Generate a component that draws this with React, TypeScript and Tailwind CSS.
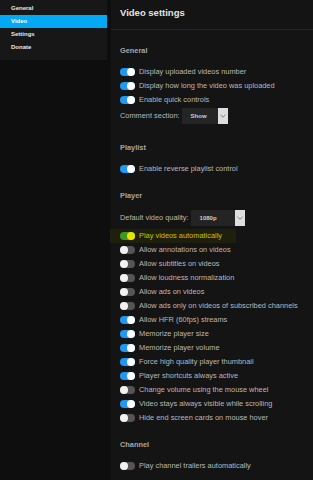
import React from 'react';

type Row = { label: string; on: boolean; highlight?: boolean };

const navItems = ['General', 'Video', 'Settings', 'Donate'];

const generalRows: Row[] = [
  { label: 'Display uploaded videos number', on: true },
  { label: 'Display how long the video was uploaded', on: true },
  { label: 'Enable quick controls', on: true },
];

const playerRows: Row[] = [
  { label: 'Play videos automatically', on: true, highlight: true },
  { label: 'Allow annotations on videos', on: false },
  { label: 'Allow subtitles on videos', on: false },
  { label: 'Allow loudness normalization', on: false },
  { label: 'Allow ads on videos', on: false },
  { label: 'Allow ads only on videos of subscribed channels', on: false },
  { label: 'Allow HFR (60fps) streams', on: true },
  { label: 'Memorize player size', on: true },
  { label: 'Memorize player volume', on: true },
  { label: 'Force high quality player thumbnail', on: true },
  { label: 'Player shortcuts always active', on: true },
  { label: 'Change volume using the mouse wheel', on: false },
  { label: 'Video stays always visible while scrolling', on: true },
  { label: 'Hide end screen cards on mouse hover', on: false },
];

function Toggle({ on, highlight }: { on: boolean; highlight?: boolean }) {
  if (highlight) {
    return (
      <span className="relative flex h-[8px] w-[15px] shrink-0 items-center rounded-full bg-[#3f9a1c]">
        <span className="absolute right-0 h-[8px] w-[8px] rounded-full bg-[#e8e400]" />
      </span>
    );
  }
  return (
    <span
      className={
        on
          ? 'relative flex h-[8px] w-[15px] shrink-0 items-center rounded-full bg-[#2196f3]'
          : 'relative flex h-[8px] w-[15px] shrink-0 items-center rounded-full bg-[#555555]'
      }
    >
      <span
        className={
          on
            ? 'absolute right-0 h-[8px] w-[8px] rounded-full bg-white'
            : 'absolute left-0 h-[8px] w-[8px] rounded-full bg-[#f2f2f2]'
        }
      />
    </span>
  );
}

function ToggleRow({ row }: { row: Row }) {
  if (row.highlight) {
    return (
      <div className="-ml-[10px] flex h-[14px] w-fit items-center gap-[4px] bg-[#1f1f0d] pl-[10px] pr-[14px]">
        <Toggle on={row.on} highlight />
        <span className="text-[#c9c400]">{row.label}</span>
      </div>
    );
  }
  return (
    <div className="flex h-[14px] items-center gap-[4px]">
      <Toggle on={row.on} />
      <span>{row.label}</span>
    </div>
  );
}

function Select({ value, width }: { value: string; width: string }) {
  return (
    <div className={`flex h-[16px] items-stretch bg-[#242424] ${width}`}>
      <span className="flex flex-1 items-center pl-[9px] text-[6px] font-bold text-[#cfcfcf]">{value}</span>
      <span className="flex w-[10px] items-center justify-center bg-[#dedede]">
        <svg width="6" height="4" viewBox="0 0 6 4" fill="none">
          <path d="M0.5 0.8 L3 3.2 L5.5 0.8" stroke="#777" strokeWidth="0.9" />
        </svg>
      </span>
    </div>
  );
}

function Heading({ children }: { children: React.ReactNode }) {
  return <div className="mb-[7px] flex h-[14px] items-center font-bold text-[#a6a6a6]">{children}</div>;
}

export default function App() {
  return (
    <div
      className="flex min-h-[480px] bg-[#0e0e0e] text-[7.4px] text-[#b9b9b9]"
      style={{ fontFamily: '"Liberation Sans", Arial, sans-serif' }}
    >
      {/* Sidebar */}
      <div className="w-[107px] shrink-0 self-start bg-[#171717] pb-[6px] pt-[2px]">
        {navItems.map((item) => (
          <div
            key={item}
            className={
              item === 'Video'
                ? 'flex h-[13px] items-center bg-[#03a9f4] pl-[11px] text-[6px] font-bold text-white'
                : 'flex h-[13px] items-center pl-[11px] text-[6px] font-bold text-[#e8e8e8]'
            }
          >
            {item}
          </div>
        ))}
      </div>

      {/* Main */}
      <div className="ml-[4px] flex-1 bg-[#141414]">
        <div className="h-[30px] border-b border-[#242424] pl-[9px] pt-[5px] text-[9.5px] font-bold leading-[15px] text-[#e4e4e4]">
          Video settings
        </div>

        <div className="pl-[9px]">
          {/* General */}
          <div className="pt-[14px]">
            <Heading>General</Heading>
            {generalRows.map((r) => (
              <ToggleRow key={r.label} row={r} />
            ))}
            <div className="mt-[1px] flex h-[16px] items-center gap-[2px]">
              <span>Comment section:</span>
              <Select value="Show" width="w-[46px]" />
            </div>
          </div>

          {/* Playlist */}
          <div className="pt-[17px]">
            <Heading>Playlist</Heading>
            <ToggleRow row={{ label: 'Enable reverse playlist control', on: true }} />
          </div>

          {/* Player */}
          <div className="pt-[13px]">
            <Heading>Player</Heading>
            <div className="mt-[5px] flex h-[16px] items-center gap-[2px]">
              <span>Default video quality:</span>
              <Select value="1080p" width="w-[54px]" />
            </div>
            <div className="mt-[3px]">
              {playerRows.map((r) => (
                <ToggleRow key={r.label} row={r} />
              ))}
            </div>
          </div>

          {/* Channel */}
          <div className="pt-[13px]">
            <Heading>Channel</Heading>
            <ToggleRow row={{ label: 'Play channel trailers automatically', on: false }} />
          </div>
        </div>
      </div>
    </div>
  );
}
